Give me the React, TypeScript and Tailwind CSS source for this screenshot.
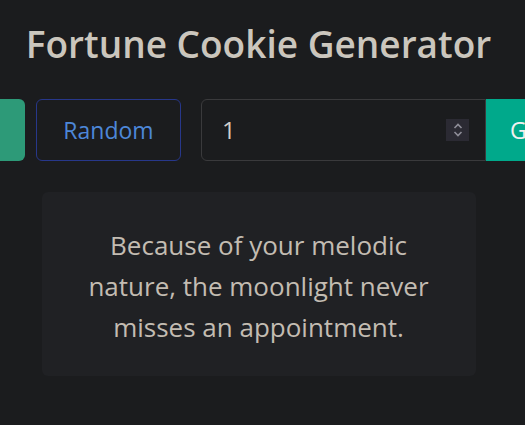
import React from "react";

export default function App() {
  return (
    <div
      className="min-h-[425px] w-full overflow-hidden bg-[#1b1c1e] pt-[16px]"
      style={{ fontFamily: '"Open Sans", "Noto Sans", sans-serif' }}
    >
      <h1 className="pr-[8px] text-center text-[37px] font-semibold leading-[56px] text-[#cbc6bd]">
        Fortune Cookie Generator
      </h1>
      <div className="mt-[27px] ml-[-105px] flex h-[62px] items-stretch">
        <button className="w-[130px] shrink-0 rounded-[6px] bg-[#2d9a78] text-[23px] text-white">
          Copy
        </button>
        <button className="ml-[11px] w-[145px] shrink-0 rounded-[6px] border border-[#27378a] text-[23px] text-[#4d87d8]">
          Random
        </button>
        <div className="ml-[20px] flex shrink-0">
          <div className="flex w-[285px] items-center rounded-l-[6px] border border-[#3a3a3c] pl-[20px] pr-[16px]">
            <span className="flex-1 text-[24px] text-[#d2cec8]">1</span>
            <div className="flex h-[22px] w-[23px] flex-col items-center justify-center bg-[#2b2a33]">
              <svg width="10" height="16" viewBox="0 0 10 16" fill="none" stroke="#8e8d98" strokeWidth="1.6">
                <path d="M1.5 6 L5 2.5 L8.5 6" />
                <path d="M1.5 10 L5 13.5 L8.5 10" />
              </svg>
            </div>
          </div>
          <button className="w-[140px] shrink-0 rounded-r-[6px] bg-[#00a98b] pl-[24px] text-left text-[23px] text-[#f0f0f0]">
            Generate
          </button>
        </div>
      </div>
      <div className="mx-auto mt-[31px] flex h-[184px] w-[434px] -translate-x-[4px] items-center justify-center rounded-[6px] bg-[#202124]">
        <p className="pt-[4px] text-center text-[26px] leading-[41px] text-[#c3bcb2]">
          Because of your melodic
          <br />
          nature, the moonlight never
          <br />
          misses an appointment.
        </p>
      </div>
    </div>
  );
}
